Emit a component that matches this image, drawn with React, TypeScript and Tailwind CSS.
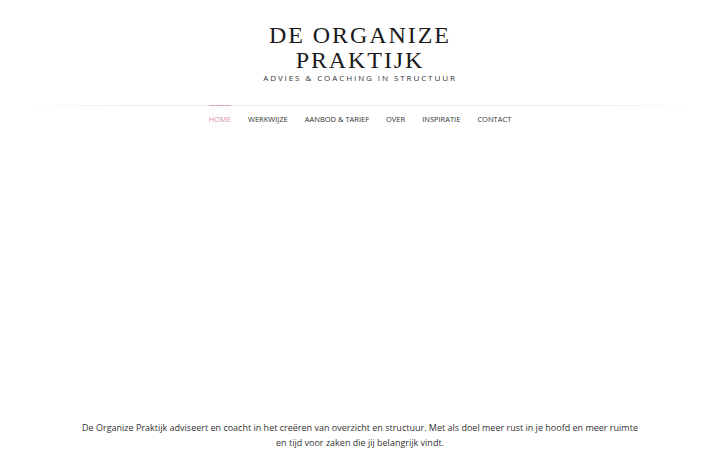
import React from 'react';

const NAV = ['Home', 'Werkwijze', 'Aanbod & Tarief', 'Over', 'Inspiratie', 'Contact'];

const App: React.FC = () => {
  return (
    <div className="min-h-screen w-full bg-white text-[#222]">
      {/* Logo */}
      <header className="flex flex-col items-center pt-[23px]">
        <h1
          className="text-center text-[24px] leading-[25px] tracking-[0.08em] text-[#1a1a1a]"
          style={{ fontFamily: '"Liberation Serif", "DejaVu Serif", serif' }}
        >
          <span className="block">DE ORGANIZE</span>
          <span className="block">PRAKTIJK</span>
        </h1>
        <p
          className="mt-0 text-[8px] uppercase leading-[10px] tracking-[0.24em] text-[#333]"
          style={{ fontFamily: '"Open Sans", sans-serif' }}
        >
          Advies &amp; Coaching in Structuur
        </p>
      </header>

      {/* Navigation */}
      <nav className="mt-[22px] px-[25px]">
        <div className="h-px w-full bg-[linear-gradient(to_right,transparent,#ececec_15%,#ececec_85%,transparent)]" />
        <ul
          className="flex justify-center gap-[17px] text-[7.5px] uppercase leading-[10px]"
          style={{ fontFamily: '"Open Sans", sans-serif' }}
        >
          {NAV.map((item, i) => (
            <li key={item} className="relative pt-[8px]">
              {i === 0 && <span className="absolute left-0 right-0 -top-px h-px bg-[#e3a9b4]" />}
              <a className={i === 0 ? 'text-[#d9909e]' : 'text-[#333]'}>{item}</a>
            </li>
          ))}
        </ul>
      </nav>

      {/* Intro */}
      <main className="flex justify-center pt-[296px]">
        <p
          className="max-w-[566px] text-center text-[9px] leading-[15px] text-[#333]"
          style={{ fontFamily: '"Open Sans", sans-serif' }}
        >
          De Organize Praktijk adviseert en coacht in het creëren van overzicht en structuur. Met als doel meer rust in je hoofd en meer ruimte en tijd voor zaken die jij belangrijk vindt.
        </p>
      </main>
    </div>
  );
};

export default App;
